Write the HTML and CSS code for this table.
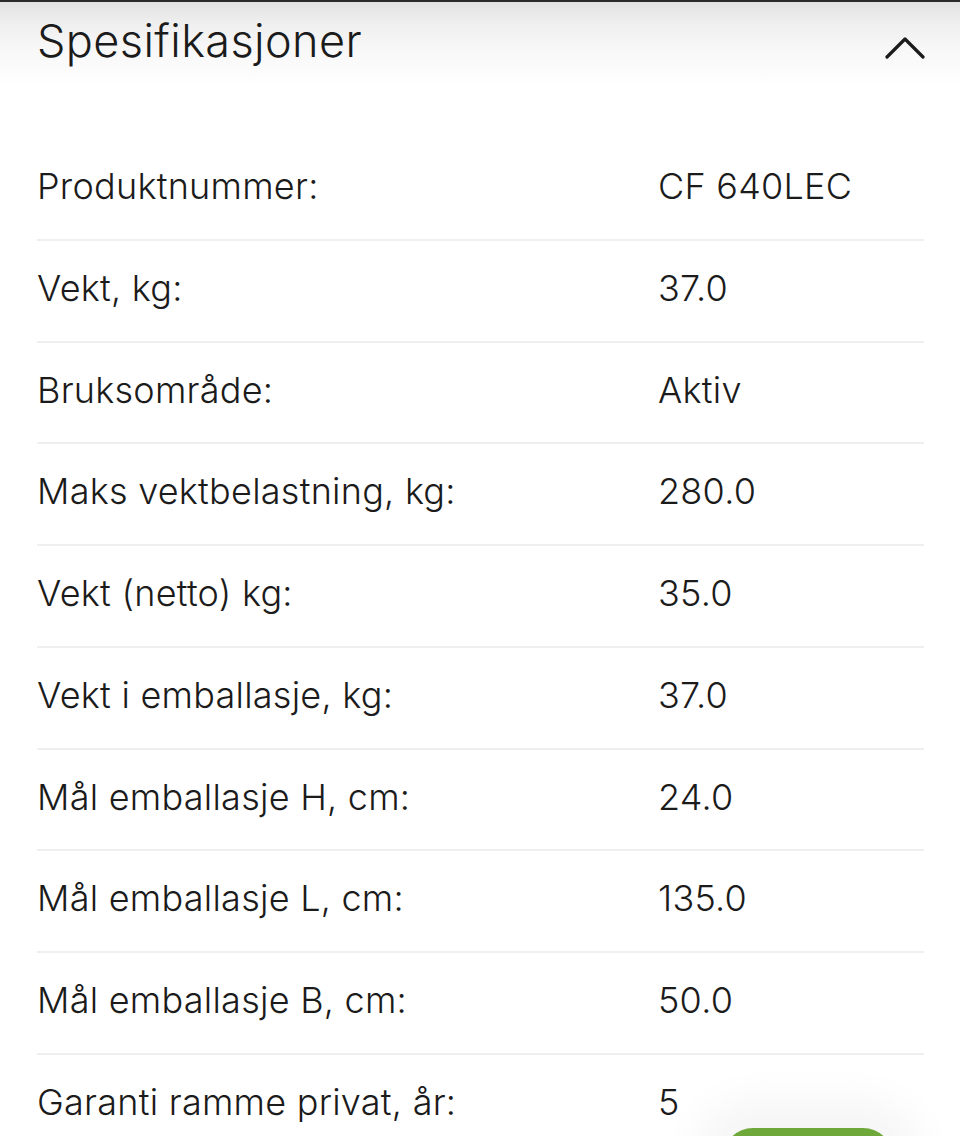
FILE: index.html
```html
<!DOCTYPE html>
<html lang="no">
<head>
<meta charset="utf-8">
<title>Spesifikasjoner</title>
<link rel="stylesheet" href="styles.css">
</head>
<body>
<div class="top-line"></div>
<section class="specs">
  <div class="specs-head">
    <h2 class="specs-title">Spesifikasjoner</h2>
    <button class="toggle" aria-label="Skjul">
      <svg width="40" height="24" viewBox="0 0 40 24" fill="none" stroke="#1b1b1b" stroke-width="3.2" stroke-linecap="round" stroke-linejoin="round"><path d="M2 21 L20 3 L38 21"/></svg>
    </button>
  </div>
  <dl class="spec-list">
    <div class="spec-row"><dt>Produktnummer:</dt><dd>CF 640LEC</dd></div>
    <div class="spec-row"><dt>Vekt, kg:</dt><dd>37.0</dd></div>
    <div class="spec-row"><dt>Bruksområde:</dt><dd>Aktiv</dd></div>
    <div class="spec-row"><dt>Maks vektbelastning, kg:</dt><dd>280.0</dd></div>
    <div class="spec-row"><dt>Vekt (netto) kg:</dt><dd>35.0</dd></div>
    <div class="spec-row"><dt>Vekt i emballasje, kg:</dt><dd>37.0</dd></div>
    <div class="spec-row"><dt>Mål emballasje H, cm:</dt><dd>24.0</dd></div>
    <div class="spec-row"><dt>Mål emballasje L, cm:</dt><dd>135.0</dd></div>
    <div class="spec-row"><dt>Mål emballasje B, cm:</dt><dd>50.0</dd></div>
    <div class="spec-row"><dt>Garanti ramme privat, år:</dt><dd>5</dd></div>
  </dl>
</section>
<div class="fab"></div>
</body>
</html>
```
FILE: styles.css
```css
* { box-sizing: border-box; }
html, body { margin: 0; padding: 0; }
body {
  width: 960px;
  height: 1136px;
  overflow: hidden;
  position: relative;
  background: #ffffff;
  font-family: Inter, "Liberation Sans", sans-serif;
  color: #1b1b1b;
}
.top-line {
  height: 2px;
  background: #2b2b2b;
}
.specs {
  padding: 0 36px 0 37px;
  background: linear-gradient(to bottom, #e2e2e2 0px, #eeeeee 20px, #f7f7f7 45px, #ffffff 85px);
  background-repeat: no-repeat;
  background-size: 100% 90px;
}
.specs-head {
  display: flex;
  justify-content: space-between;
  align-items: flex-start;
  padding-top: 14px;
  height: 137px;
}
.specs-title {
  margin: 0;
  font-size: 45px;
  font-weight: 300;
  line-height: 50px;
  letter-spacing: 0.4px;
}
.toggle {
  border: 0;
  background: none;
  padding: 0;
  margin-top: 20px;
  margin-right: -1px;
  display: flex;
}
.spec-list {
  margin: 0;
}
.spec-row {
  display: grid;
  grid-template-columns: 621px 1fr;
  padding: 25px 0 30.75px;
  border-bottom: 2px solid #efefef;
  font-size: 36px;
  font-weight: 300;
  line-height: 44px;
  letter-spacing: 0.25px;
}
.spec-row dt, .spec-row dd {
  margin: 0;
  white-space: nowrap;
}
.fab {
  position: absolute;
  left: 723px;
  top: 1128px;
  width: 170px;
  height: 60px;
  border-radius: 30px;
  background: #6fa83a;
  box-shadow: 0 0 40px 30px rgba(0,0,0,0.04);
}
```
